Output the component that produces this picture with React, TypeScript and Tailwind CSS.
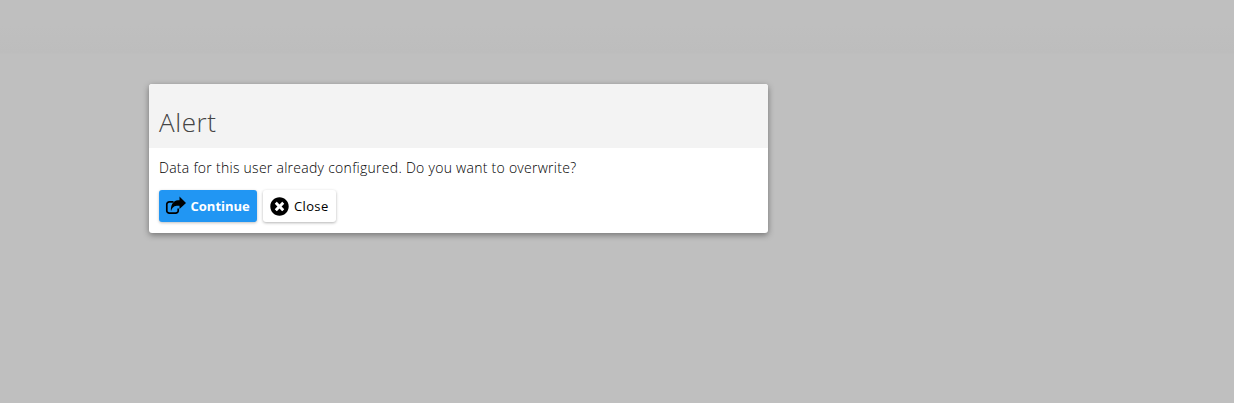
import React from 'react';
import { FaTimesCircle } from 'react-icons/fa';

function ShareIcon() {
    return (
        <svg viewBox="0 0 22 22" className="mr-[3.5px] h-[22px] w-[22px] shrink-0">
            <path d="M8.5 6.8H4.3A2.5 2.5 0 0 0 1.8 9.3V15.7A2.5 2.5 0 0 0 4.3 18.2H10.7A2.5 2.5 0 0 0 13.2 15.7V13.5" fill="none" stroke="black" strokeWidth="1.7" />
            <path d="M14.5 1.5L21 8L14.5 14V10.8H13C9.5 10.8 7 12 6 16.5C5.2 11 8 5.2 13 5.2H14.5Z" fill="black" />
        </svg>
    );
}

export default function App() {
    return (
        <div className="h-[403px] w-[1234px] overflow-hidden bg-[#bfbfbf] bg-[linear-gradient(to_bottom,#bfbfbf_0px,#bfbfbf_25px,#bdbdbd_53px,#bfbfbf_54px)] pl-[149px] pt-[84px] font-['Open_Sans',sans-serif]">
            <div className="w-[619px] overflow-hidden rounded-[3px] bg-white shadow-[0_2px_6px_rgba(0,0,0,0.4)]">
                {/* Header */}
                <div className="flex h-[64px] items-end bg-[#f3f3f3] px-[10px] pb-[8px]">
                    <h2 className="text-[26px] leading-[36px] font-light tracking-[0.6px] text-[#444]">Alert</h2>
                </div>

                {/* Body */}
                <div className="px-[10px] pt-[10px] pb-[11px]">
                    <p className="text-[14px] leading-[20px] font-light tracking-[0.27px] text-black">
                        Data for this user already configured. Do you want to overwrite?
                    </p>
                    <div className="mt-[12px] flex gap-[6px]">
                        <button className="flex h-[32px] w-[98px] items-center rounded-[3px] bg-[#2196f3] pl-[6px] text-[13px] font-bold text-white shadow-[0_1px_3px_rgba(0,0,0,0.25)]">
                            <ShareIcon />
                            <span className="pt-[1px]">Continue</span>
                        </button>
                        <button className="flex h-[32px] w-[73px] items-center rounded-[3px] bg-white pl-[7px] text-[13px] font-normal tracking-[0.35px] text-black shadow-[0_1px_3px_rgba(0,0,0,0.3)]">
                            <FaTimesCircle className="mr-[5px] text-[19px] text-black" />
                            <span className="pt-[2px]">Close</span>
                        </button>
                    </div>
                </div>
            </div>
        </div>
    );
}
